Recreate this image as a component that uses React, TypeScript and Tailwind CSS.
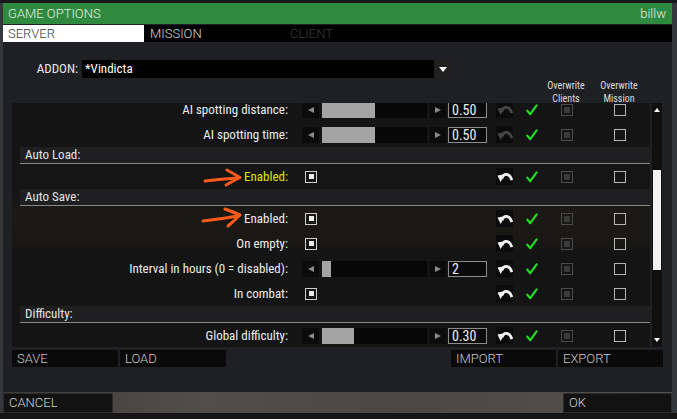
import React from "react";

const COND = "[font-family:'Roboto_Condensed','Liberation_Sans_Narrow',Roboto,sans-serif] [font-stretch:condensed]";

function UndoIcon({ on }: { on: boolean }) {
  const c = on ? "#f2f2f2" : "#454545";
  return (
    <svg width="16" height="13" viewBox="0 0 16 13">
      <path d="M5 8.5 C6.5 3 12.5 2.5 14.8 10" stroke={c} strokeWidth="2.8" fill="none" />
      <path d="M0.5 5.5 L8 4.2 L3.6 12 Z" fill={c} />
    </svg>
  );
}

function Check() {
  return (
    <svg width="12" height="12" viewBox="0 0 12 12">
      <path d="M1.3 6.6 L4.3 10.2 L10.6 1.4" stroke="#22dd22" strokeWidth="2.2" fill="none" strokeLinecap="round" strokeLinejoin="round" />
    </svg>
  );
}

function Tail({ on }: { on: boolean }) {
  return (
    <>
      <div className="w-[17px] h-[17px] bg-[#0b0b0b] flex items-center justify-center">
        <UndoIcon on={on} />
      </div>
      <div className="ml-[13px] w-[12px] flex items-center justify-center">
        <Check />
      </div>
      <div className="ml-[23px] w-[12px] h-[12px] border border-[#4a4a4a] flex items-center justify-center">
        <div className="w-[6px] h-[6px] bg-[#3a3a3a]" />
      </div>
      <div className="ml-[41px] w-[12px] h-[12px] border-[1.5px] border-[#b4b4b4]" />
    </>
  );
}

function Label({ text, yellow }: { text: string; yellow?: boolean }) {
  return (
    <div className={`w-[276px] text-right text-[13px] leading-none ${COND} ${yellow ? "text-[#e2e200]" : "text-[#ececec]"}`}>
      {text}
    </div>
  );
}

function SliderRow({ label, fill, value, on }: { label: string; fill: string; value: string; on: boolean }) {
  return (
    <div className="h-[25px] flex items-center">
      <Label text={label} />
      <div className="w-[208px] pl-[14px] flex items-center">
        <div className="w-[17px] h-[16px] bg-[#0b0b0b] flex items-center justify-center">
          <div className="w-0 h-0 border-y-[3.5px] border-y-transparent border-r-[6px] border-r-[#8a8a8a]" />
        </div>
        <div className="ml-[3px] w-[105px] h-[16px] bg-[#070707]">
          <div className={`${fill} h-full bg-[#a4a4a4]`} />
        </div>
        <div className="ml-[3px] w-[16px] h-[16px] bg-[#0b0b0b] flex items-center justify-center">
          <div className="w-0 h-0 border-y-[3.5px] border-y-transparent border-l-[6px] border-l-[#8a8a8a]" />
        </div>
        <div className={`ml-[2px] w-[39px] h-[16px] border border-[#8c8c8c] bg-[#0a0a0a] text-[14px] leading-[14px] text-[#f0f0f0] pl-[3px] ${COND}`}>
          {value}
        </div>
      </div>
      <Tail on={on} />
    </div>
  );
}

function CheckRow({ label, yellow }: { label: string; yellow?: boolean }) {
  return (
    <div className="h-[25px] flex items-center">
      <Label text={label} yellow={yellow} />
      <div className="w-[208px] pl-[17px] flex items-center">
        <div className="w-[12px] h-[12px] border-[1.5px] border-[#cfcfcf] flex items-center justify-center">
          <div className="w-[5px] h-[5px] bg-[#ececec]" />
        </div>
      </div>
      <Tail on={true} />
    </div>
  );
}

function Header({ title }: { title: string }) {
  return (
    <div className={`ml-[8px] h-[17px] bg-[#1f1f21] border-b border-[#888888] pl-[5px] text-[13px] leading-[15px] text-[#e4e4e4] ${COND}`}>
      {title}
    </div>
  );
}

function Btn({ text, w, ml }: { text: string; w: string; ml: string }) {
  return (
    <div className={`${w} ${ml} h-[17px] bg-[#0a0a0a] pl-[5px] text-[13px] leading-[17px] font-light text-[#c8c8c8]`}>
      {text}
    </div>
  );
}

export default function App() {
  return (
    <div className="relative w-[677px] h-[419px] overflow-hidden bg-[#34373b] [font-family:Roboto,sans-serif]">
      <div className="h-[3px] bg-[#17181b]" />
      <div className="ml-[3px] w-[669px] bg-[#1f2023] flex flex-col">
        {/* title */}
        <div className="h-[21px] bg-[#2f8a3f] flex items-center justify-between pl-[5px] pr-[6px] text-[13px] font-light text-[#e4eee4]">
          <span>GAME OPTIONS</span>
          <span>billw</span>
        </div>
        {/* tabs */}
        <div className="mt-px h-[17px] bg-black flex text-[13px] font-light leading-[17px]">
          <div className="w-[141px] bg-white text-[#3a3a3a] pl-[5px]">SERVER</div>
          <div className="w-[141px] text-[#d6d6d6] pl-[6px]">MISSION</div>
          <div className="w-[141px] text-[#3a3a3a] pl-[5px]">CLIENT</div>
        </div>
        {/* panel */}
        <div className="h-[350px] bg-[#1f2023] flex flex-col">
          <div className="mt-[18px] h-[18px] flex items-center">
            <div className={`w-[75px] text-right text-[13px] text-[#e6e6e6] ${COND}`}>ADDON:</div>
            <div className={`ml-[4px] w-[352px] h-[18px] bg-black pl-[3px] text-[13px] leading-[18px] text-white ${COND}`}>*Vindicta</div>
            <div className="w-[18px] h-[18px] bg-[#202020] flex items-center justify-center">
              <div className="w-0 h-0 border-x-[4px] border-x-transparent border-t-[5px] border-t-white" />
            </div>
          </div>
          <div className={`h-[25px] pt-[1px] flex text-[10px] leading-[13px] text-[#dcdcdc] ${COND}`}>
            <div className="ml-[543px] w-[40px] text-center">Overwrite<br />Clients</div>
            <div className="ml-[13px] w-[40px] text-center">Overwrite<br />Mission</div>
          </div>
          <div className="flex">
            <div className="ml-[9px] w-[638px] h-[244px] overflow-hidden bg-[linear-gradient(to_bottom,#141415_0%,#151515_38%,#1b1916_43%,#1a1815_55%,#141415_62%,#141415_100%)]">
              <div className="-mt-[6px]">
                <SliderRow label="AI spotting distance:" fill="w-[53px]" value="0.50" on={false} />
                <SliderRow label="AI spotting time:" fill="w-[53px]" value="0.50" on={false} />
                <Header title="Auto Load:" />
                <CheckRow label="Enabled:" yellow />
                <Header title="Auto Save:" />
                <CheckRow label="Enabled:" />
                <CheckRow label="On empty:" />
                <SliderRow label="Interval in hours (0 = disabled):" fill="w-[9px]" value="2" on={true} />
                <CheckRow label="In combat:" />
                <Header title="Difficulty:" />
                <SliderRow label="Global difficulty:" fill="w-[32px]" value="0.30" on={true} />
              </div>
            </div>
            <div className="ml-[2px] w-[10px] h-[244px] bg-[#0f0f10] flex flex-col items-center">
              <div className="mt-[5px] w-0 h-0 border-x-[3px] border-x-transparent border-b-[4px] border-b-white" />
              <div className="mt-[58px] w-[8px] h-[100px] bg-[#f2f2f2]" />
              <div className="mt-[68px] w-0 h-0 border-x-[3px] border-x-transparent border-t-[4px] border-t-white" />
            </div>
          </div>
          <div className="mt-[3px] flex">
            <Btn text="SAVE" w="w-[106px]" ml="ml-[9px]" />
            <Btn text="LOAD" w="w-[106px]" ml="ml-[2px]" />
            <Btn text="IMPORT" w="w-[105px]" ml="ml-[225px]" />
            <Btn text="EXPORT" w="w-[105px]" ml="ml-[2px]" />
          </div>
        </div>
        {/* bottom bar */}
        <div className="h-[21px] bg-[linear-gradient(to_right,#3f3d3a,#514e4a_30%,#4b4844_60%,#54514d)] flex items-center justify-between text-[13px] font-light text-[#cfcfcf]">
          <div className="w-[110px] h-[20px] bg-[#121212] border border-[#2c2c2c] pl-[5px] leading-[18px]">CANCEL</div>
          <div className="w-[109px] h-[20px] bg-[#121212] border border-[#2c2c2c] pl-[5px] leading-[18px]">OK</div>
        </div>
      </div>
      <div className="h-[10px] bg-[#151516]" />
      {/* annotation arrows */}
      <svg className="absolute left-0 top-0 pointer-events-none" width="677" height="419" viewBox="0 0 677 419">
        <g stroke="#ff5a1a" strokeWidth="3" fill="none" strokeLinecap="round" strokeLinejoin="round">
          <path d="M205 181 Q221 179 238 178" />
          <path d="M227 170 Q234 174 240 177.5 Q233 181 226 185" />
          <path d="M203 221 Q221 219 238 216" />
          <path d="M225 209 Q233 212 240 215 Q234 221 228 226" />
        </g>
      </svg>
    </div>
  );
}
